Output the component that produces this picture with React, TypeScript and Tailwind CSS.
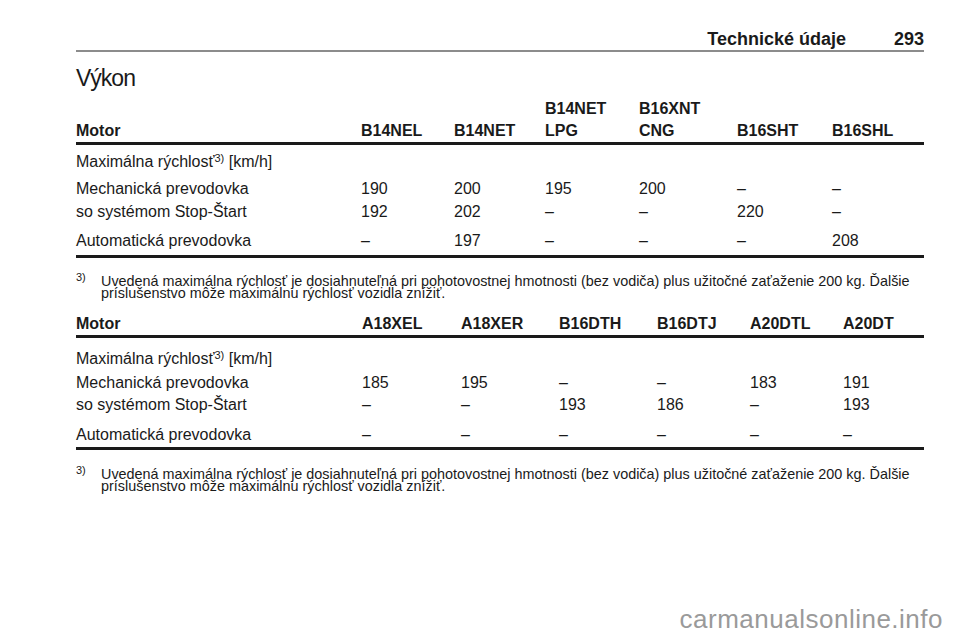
import React from "react";

const T1_COLS = "grid grid-cols-[285px_93px_91px_94px_98px_95px_92px]";
const T2_COLS = "grid grid-cols-[286px_99px_98px_98px_93px_93px_81px]";

function Sup() {
  return <span className="relative -top-[5px] text-[11px] leading-none">3)</span>;
}

function MaxLabel() {
  return (
    <span>
      Maximálna rýchlosť
      <Sup /> [km/h]
    </span>
  );
}

function Row({ cols, label, values, className = "" }: { cols: string; label: React.ReactNode; values: string[]; className?: string }) {
  return (
    <div className={`${cols} h-[22px] leading-[22px] ${className}`}>
      <div className="whitespace-nowrap">{label}</div>
      {values.map((v, i) => (
        <div key={i} className="whitespace-nowrap">
          {v}
        </div>
      ))}
    </div>
  );
}

function Footnote({ className = "" }: { className?: string }) {
  return (
    <div className={`flex text-[14.4px] leading-[12px] ${className}`}>
      <div className="w-[25px] shrink-0 text-[11px] relative -top-[4px]">3)</div>
      <div className="flex flex-col whitespace-nowrap">
        <span>Uvedená maximálna rýchlosť je dosiahnuteľná pri pohotovostnej hmotnosti (bez vodiča) plus užitočné zaťaženie 200 kg. Ďalšie</span>
        <span>príslušenstvo môže maximálnu rýchlosť vozidla znížiť.</span>
      </div>
    </div>
  );
}

export default function App() {
  const d = "–";
  return (
    <div className="relative w-[960px] h-[642px] bg-white text-[#1a1a1a] font-['Liberation_Sans',Arial,sans-serif] overflow-hidden">
      <div className="ml-[76px] w-[848px]">
        {/* page header */}
        <div className="flex justify-end items-baseline gap-[48px] pt-[30px] pb-[2px] border-b-2 border-[#8c8c8c] text-[18px] leading-[18px] font-bold">
          <span>Technické údaje</span>
          <span>293</span>
        </div>

        <div className="mt-[15px] text-[23px] leading-[23px] tracking-[-1px]">Výkon</div>

        {/* table 1 */}
        <div className={`${T1_COLS} mt-[8px] h-[44px] border-b-[3px] border-[#1a1a1a] font-bold text-[16px] leading-[22px] box-content`}>
          <div className="flex flex-col justify-end">Motor</div>
          <div className="flex flex-col justify-end">B14NEL</div>
          <div className="flex flex-col justify-end">B14NET</div>
          <div className="flex flex-col justify-end">
            <span>B14NET</span>
            <span>LPG</span>
          </div>
          <div className="flex flex-col justify-end">
            <span>B16XNT</span>
            <span>CNG</span>
          </div>
          <div className="flex flex-col justify-end">B16SHT</div>
          <div className="flex flex-col justify-end">B16SHL</div>
        </div>
        <div className="flex flex-col pt-[6px] pb-[3px] border-b-[3px] border-[#1a1a1a] text-[16px]">
          <Row cols={T1_COLS} label={<MaxLabel />} values={[]} />
          <Row cols={T1_COLS} className="mt-[5px]" label="Mechanická prevodovka" values={["190", "200", "195", "200", d, d]} />
          <Row cols={T1_COLS} className="mt-[1px]" label="so systémom Stop-Štart" values={["192", "202", d, d, "220", d]} />
          <Row cols={T1_COLS} className="mt-[7px]" label="Automatická prevodovka" values={[d, "197", d, d, d, "208"]} />
        </div>
        <Footnote className="mt-[17px]" />

        {/* table 2 */}
        <div className={`${T2_COLS} mt-[14px] h-[22px] border-b-[3px] border-[#1a1a1a] font-bold text-[16px] leading-[22px] box-content`}>
          <div>Motor</div>
          <div>A18XEL</div>
          <div>A18XER</div>
          <div>B16DTH</div>
          <div>B16DTJ</div>
          <div>A20DTL</div>
          <div>A20DT</div>
        </div>
        <div className="flex flex-col pt-[10px] pb-[1px] border-b-[3px] border-[#1a1a1a] text-[16px]">
          <Row cols={T2_COLS} label={<MaxLabel />} values={[]} />
          <Row cols={T2_COLS} className="mt-[2px]" label="Mechanická prevodovka" values={["185", "195", d, d, "183", "191"]} />
          <Row cols={T2_COLS} label="so systémom Stop-Štart" values={[d, d, "193", "186", d, "193"]} />
          <Row cols={T2_COLS} className="mt-[8px]" label="Automatická prevodovka" values={[d, d, d, d, d, d]} />
        </div>
        <Footnote className="mt-[18px]" />
      </div>

      {/* watermark */}
      <div className="absolute right-[17px] top-[606px] text-[26px] leading-[26px] tracking-[0.5px] text-[#9a9a9a]">
        carmanualsonline.info
      </div>
    </div>
  );
}
